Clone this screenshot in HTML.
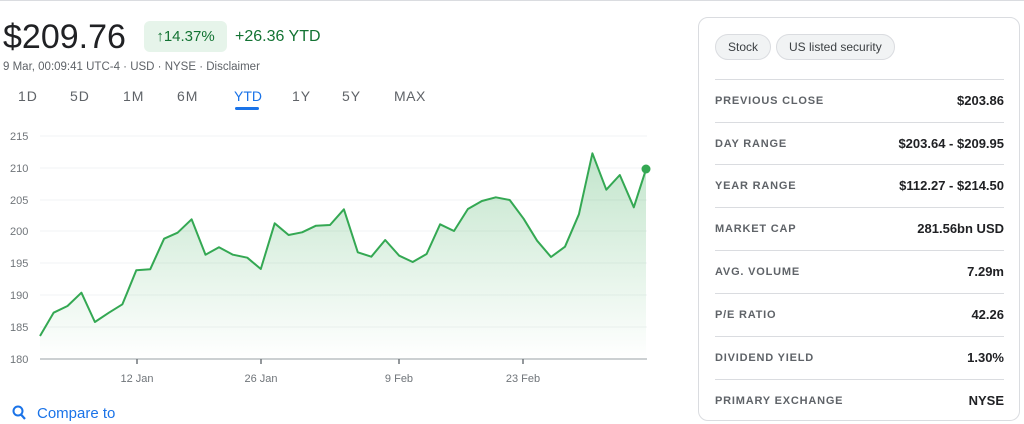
<!DOCTYPE html>
<html><head><style>
*{margin:0;padding:0;box-sizing:border-box}
body{width:1024px;height:424px;background:#fff;font-family:"Liberation Sans",Arial,sans-serif;position:relative;overflow:hidden;color:#202124}
.a{position:absolute;white-space:nowrap}
.price{left:3px;top:18px;font-size:34px;color:#202124}
.badge{left:144px;top:21px;width:83px;height:31px;background:#e6f4ea;border-radius:6px;color:#137333;font-size:15px;line-height:31px;text-align:center}
.ytd{left:235px;top:28px;font-size:16px;color:#137333}
.sub{left:3px;top:61px;font-size:11.5px;color:#5f6368}
.tab{top:88px;font-size:14px;color:#5f6368;letter-spacing:1px}
.card{left:698px;top:17px;width:322px;height:404px;border:1px solid #dadce0;border-radius:10px}
.chip{top:34px;height:26px;border:1px solid #dadce0;background:#f1f3f4;border-radius:13px;font-size:12px;color:#3c4043;line-height:24px;padding:0 12px}
.row{left:715px;width:289px;height:43px;border-top:1px solid #dadce0;font-size:11px;letter-spacing:.8px;color:#5f6368;font-weight:bold;line-height:42px}
.row span{position:absolute;right:0;font-size:13px;letter-spacing:0;color:#202124}
</style></head><body>
<div class="a" style="left:0;top:0;width:1024px;height:1px;background:#dadce0"></div>
<div class="a price">$209.76</div>
<div class="a badge">↑14.37%</div>
<div class="a ytd">+26.36 YTD</div>
<div class="a sub">9 Mar, 00:09:41 UTC-4 · USD · NYSE · Disclaimer</div>
<div class="a tab" style="left:18px">1D</div>
<div class="a tab" style="left:70px">5D</div>
<div class="a tab" style="left:123px">1M</div>
<div class="a tab" style="left:177px">6M</div>
<div class="a tab" style="left:234px;color:#1a73e8;letter-spacing:0">YTD</div>
<div class="a" style="left:235px;top:107px;width:24px;height:3px;background:#1a73e8;border-radius:2px"></div>
<div class="a tab" style="left:292px">1Y</div>
<div class="a tab" style="left:342px">5Y</div>
<div class="a tab" style="left:394px;letter-spacing:.5px">MAX</div>
<svg class="a" style="left:0;top:120px" width="660" height="304" viewBox="0 120 660 304">
<defs><linearGradient id="g" x1="0" y1="0" x2="0" y2="1"><stop offset="0" stop-color="#34a853" stop-opacity=".3"/><stop offset="1" stop-color="#34a853" stop-opacity="0"/></linearGradient></defs>
<g stroke="#f1f3f4" stroke-width="1">
<line x1="40" x2="647" y1="136" y2="136"/><line x1="40" x2="647" y1="168" y2="168"/><line x1="40" x2="647" y1="200" y2="200"/><line x1="40" x2="647" y1="231" y2="231"/><line x1="40" x2="647" y1="263" y2="263"/><line x1="40" x2="647" y1="295" y2="295"/><line x1="40" x2="647" y1="327" y2="327"/></g>
<g font-size="11" fill="#70757a" font-family="Liberation Sans">
<text x="10" y="140">215</text><text x="10" y="172">210</text><text x="10" y="204">205</text><text x="10" y="235">200</text><text x="10" y="267">195</text><text x="10" y="299">190</text><text x="10" y="331">185</text><text x="10" y="363">180</text>
<text x="137" y="382" text-anchor="middle">12 Jan</text><text x="261" y="382" text-anchor="middle">26 Jan</text><text x="399" y="382" text-anchor="middle">9 Feb</text><text x="523" y="382" text-anchor="middle">23 Feb</text></g>
<path d="M40,336L53.6,312.7L67.5,306L81.4,292.7L94.9,322L108.9,312.7L122.4,304.3L136.3,270.3L150.2,269.3L164.1,238.7L177.6,232.7L191.6,219.3L205.5,254.7L219,247.3L232.9,254.7L247.3,257.7L260.8,269L274.7,223.3L288.6,235L302.1,232.3L316,225.7L330,225L343.9,209.3L357.8,252.3L371.3,256.7L385.2,240L399.2,255.7L412.7,262L426.6,254L440.1,224.3L454,231L467.9,209L481.9,201L495.8,197.3L509.7,200L523.6,218.7L537.1,240.7L551,257L565,246.7L578.9,214.3L592.4,153.3L606.3,189.7L619.8,175L633.8,207.3L646,169.3L646,359L40,359Z" fill="url(#g)"/>
<path d="M40,336L53.6,312.7L67.5,306L81.4,292.7L94.9,322L108.9,312.7L122.4,304.3L136.3,270.3L150.2,269.3L164.1,238.7L177.6,232.7L191.6,219.3L205.5,254.7L219,247.3L232.9,254.7L247.3,257.7L260.8,269L274.7,223.3L288.6,235L302.1,232.3L316,225.7L330,225L343.9,209.3L357.8,252.3L371.3,256.7L385.2,240L399.2,255.7L412.7,262L426.6,254L440.1,224.3L454,231L467.9,209L481.9,201L495.8,197.3L509.7,200L523.6,218.7L537.1,240.7L551,257L565,246.7L578.9,214.3L592.4,153.3L606.3,189.7L619.8,175L633.8,207.3L646,169.3" fill="none" stroke="#34a853" stroke-width="2" stroke-linejoin="round"/>
<circle cx="646" cy="169" r="4.5" fill="#34a853"/>
<line x1="40" x2="647" y1="359" y2="359" stroke="#9aa0a6" stroke-width="1"/>
<g stroke="#70757a" stroke-width="1.5"><line x1="137" x2="137" y1="359" y2="364"/><line x1="261" x2="261" y1="359" y2="364"/><line x1="399" x2="399" y1="359" y2="364"/><line x1="523" x2="523" y1="359" y2="364"/></g>
<circle cx="18" cy="411" r="4.5" fill="none" stroke="#1a73e8" stroke-width="2"/><line x1="21" y1="414.5" x2="25" y2="419" stroke="#1a73e8" stroke-width="2.2"/>
</svg>
<div class="a" style="left:37px;top:405px;font-size:15px;color:#1a73e8">Compare to</div>
<div class="a card"></div>
<div class="a chip" style="left:715px">Stock</div>
<div class="a chip" style="left:776px">US listed security</div>
<div class="a row" style="top:79px">PREVIOUS CLOSE<span>$203.86</span></div>
<div class="a row" style="top:122px">DAY RANGE<span>$203.64 - $209.95</span></div>
<div class="a row" style="top:164px">YEAR RANGE<span>$112.27 - $214.50</span></div>
<div class="a row" style="top:207px">MARKET CAP<span>281.56bn USD</span></div>
<div class="a row" style="top:250px">AVG. VOLUME<span>7.29m</span></div>
<div class="a row" style="top:293px">P/E RATIO<span>42.26</span></div>
<div class="a row" style="top:336px">DIVIDEND YIELD<span>1.30%</span></div>
<div class="a row" style="top:379px">PRIMARY EXCHANGE<span>NYSE</span></div>
</body></html>
